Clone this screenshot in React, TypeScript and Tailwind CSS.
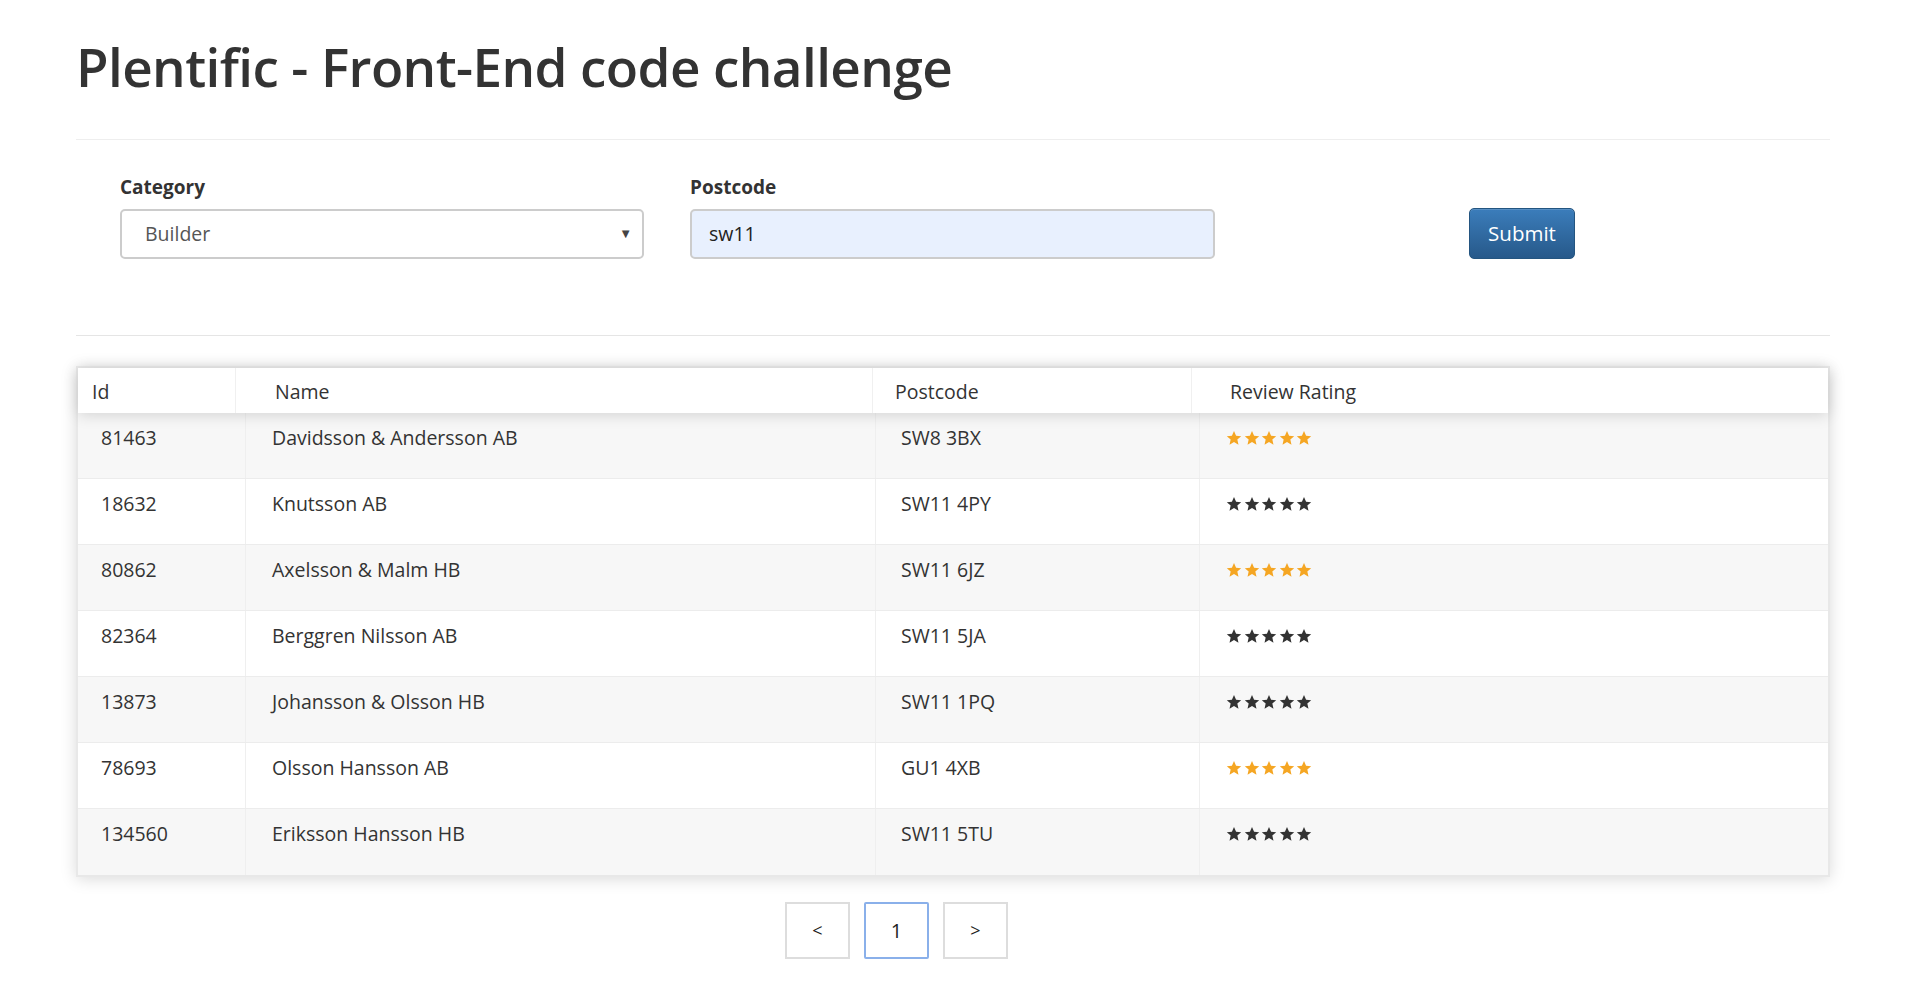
import React from "react";

type Row = { id: string; name: string; postcode: string; gold: boolean };

const rows: Row[] = [
  { id: "81463", name: "Davidsson & Andersson AB", postcode: "SW8 3BX", gold: true },
  { id: "18632", name: "Knutsson AB", postcode: "SW11 4PY", gold: false },
  { id: "80862", name: "Axelsson & Malm HB", postcode: "SW11 6JZ", gold: true },
  { id: "82364", name: "Berggren Nilsson AB", postcode: "SW11 5JA", gold: false },
  { id: "13873", name: "Johansson & Olsson HB", postcode: "SW11 1PQ", gold: false },
  { id: "78693", name: "Olsson Hansson AB", postcode: "GU1 4XB", gold: true },
  { id: "134560", name: "Eriksson Hansson HB", postcode: "SW11 5TU", gold: false },
];

function Stars({ gold }: { gold: boolean }) {
  return (
    <div className="flex gap-[1.5px]">
      {[0, 1, 2, 3, 4].map((i) => (
        <svg key={i} width="16" height="16" viewBox="0 0 24 24">
          <polygon
            points="12,1.5 15.1,8.6 22.8,9.3 17,14.4 18.7,22 12,18 5.3,22 7,14.4 1.2,9.3 8.9,8.6"
            fill={gold ? "#f5a623" : "#333333"}
          />
        </svg>
      ))}
    </div>
  );
}

export default function App() {
  return (
    <div className="min-h-screen bg-white text-[#333] font-['Open_Sans',sans-serif] pl-[76px] pr-[85px]">
      <h1 className="pt-[32px] pb-[37px] text-[53px] leading-[70px] font-semibold tracking-[-0.6px] text-[#333]">
        Plentific - Front-End code challenge
      </h1>
      <div className="border-t border-[#eee]" />

      <form className="flex items-start pl-[44px] pt-[35px] pb-[76px]" onSubmit={(e) => e.preventDefault()}>
        <div className="w-[524px]">
          <label className="block text-[19px] font-bold leading-[24px] mb-[10px]">Category</label>
          <div className="relative h-[50px] rounded-[5px] border-2 border-[#ccc] bg-white flex items-center pl-[23px] text-[19.5px] text-[#555]">
            Builder
            <span className="absolute right-[10px] top-[13px] text-[13px] text-[#444]">▼</span>
          </div>
        </div>
        <div className="w-[525px] ml-[46px]">
          <label className="block text-[19px] font-bold leading-[24px] mb-[10px]">Postcode</label>
          <div className="h-[50px] rounded-[5px] border-2 border-[#ccc] bg-[#e8f0fe] flex items-center pl-[17px] text-[19.5px] text-[#222]">
            sw11
          </div>
        </div>
        <button
          type="submit"
          className="ml-[254px] mt-[33px] w-[106px] h-[51px] rounded-[5px] border border-[#245580] bg-gradient-to-b from-[#3b7dbb] to-[#27598a] text-white text-[20.5px] shadow-[inset_0_1px_0_rgba(255,255,255,0.15)]"
        >
          Submit
        </button>
      </form>
      <div className="border-t border-[#e5e5e5]" />

      <div className="mt-[30px] border-2 border-[#e8e8e8] shadow-[0_2px_15px_rgba(0,0,0,0.15)] bg-white">
        <div className="relative z-10 grid grid-cols-[158px_637px_319px_1fr] h-[45px] items-center text-[19.5px] shadow-[0_2px_15px_rgba(0,0,0,0.15)] bg-white">
          <div className="h-full flex items-center pt-[2px] pl-[14px] border-r border-[#f0f0f0]">Id</div>
          <div className="h-full flex items-center pt-[2px] pl-[39px] border-r border-[#f0f0f0]">Name</div>
          <div className="h-full flex items-center pt-[2px] pl-[22px] border-r border-[#f0f0f0]">Postcode</div>
          <div className="h-full flex items-center pt-[2px] pl-[38px]">Review Rating</div>
        </div>
        {rows.map((r, i) => (
          <div
            key={r.id}
            className={`grid grid-cols-[168px_630px_324px_1fr] h-[66px] text-[19.5px] text-[#333] border-b border-[#ececec] last:border-b-0 ${
              i % 2 === 0 ? "bg-[#f7f7f7]" : "bg-white"
            }`}
          >
            <div className="pl-[23px] pt-[13px] leading-[24px] border-r border-[#efefef]">{r.id}</div>
            <div className="pl-[26px] pt-[13px] leading-[24px] border-r border-[#efefef]">{r.name}</div>
            <div className="pl-[25px] pt-[13px] leading-[24px] border-r border-[#efefef]">{r.postcode}</div>
            <div className="pl-[26px] pt-[17px]">
              <Stars gold={r.gold} />
            </div>
          </div>
        ))}
      </div>

      <div className="flex gap-[14px] pl-[709px] pt-[25px] pb-[40px]">
        <button className="w-[65px] h-[57px] border-2 border-[#ddd] bg-white text-[18px] text-[#222]">&lt;</button>
        <button className="w-[65px] h-[57px] border-2 border-[#8ab0ea] rounded-[2px] bg-white text-[20px] text-[#222]">1</button>
        <button className="w-[65px] h-[57px] border-2 border-[#ddd] bg-white text-[18px] text-[#222]">&gt;</button>
      </div>
    </div>
  );
}
